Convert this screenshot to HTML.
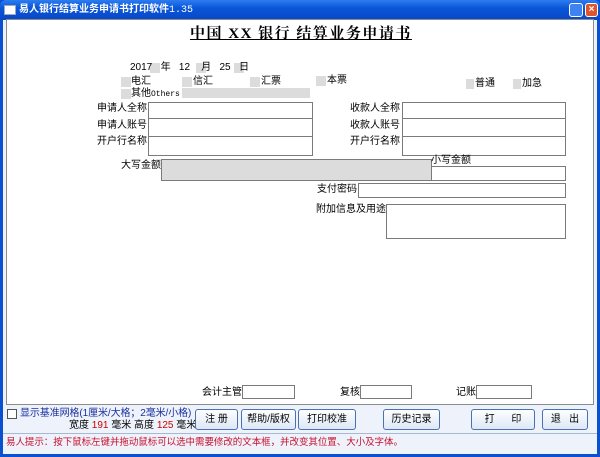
<!DOCTYPE html>
<html><head><meta charset="utf-8"><style>
*{margin:0;padding:0;box-sizing:border-box}
body{width:600px;height:457px;overflow:hidden;background:#0a50d0;font-family:"Liberation Sans","Noto Sans CJK SC","WenQuanYi Zen Hei",sans-serif;font-size:10px;color:#000;position:relative}
.a{position:absolute;white-space:nowrap;line-height:12px}
#tb{position:absolute;left:0;top:0;width:600px;height:20px;background:linear-gradient(#2e7cf0,#0a56d8 40%,#0848c8);border-radius:6px 6px 0 0}
#cl{position:absolute;left:3px;top:20px;width:594px;height:434px;background:#eef3fb}
#pn{position:absolute;left:6px;top:19px;width:588px;height:386px;background:#fff;border:1px solid #8c8c8c}
.g{position:absolute;background:#dcdcdc}
.bx{position:absolute;border:1px solid #7a7a7a;background:#fff}
.btn{position:absolute;top:409px;height:21px;border:1px solid #4a72b0;border-radius:3px;background:linear-gradient(#fdfeff,#dde8f6);text-align:center;line-height:19px;font-size:10px}
</style></head><body>
<div id="tb"></div>
<div class="a" style="left:4px;top:5px;width:12px;height:10px;background:#fff;border:1px solid #9ab"></div>
<div class="a" style="left:19px;top:4px;color:#fff;font-weight:bold;font-size:10px">易人银行结算业务申请书打印软件<span style="font-family:'Liberation Mono',monospace;font-weight:normal">1.35</span></div>
<div class="a" style="left:569px;top:3px;width:14px;height:14px;background:#3f82f0;border:1px solid #fff;border-radius:3px"></div>
<div class="a" style="left:585px;top:3px;width:13px;height:14px;background:#e0552c;border:1px solid #fff;border-radius:3px;color:#fff;font-size:10px;text-align:center;font-weight:bold">×</div>
<div id="cl"></div>
<div id="pn"></div>
<div class="a" style="left:190px;top:25px;font-size:15px;line-height:18px;font-weight:bold;text-decoration:underline;font-family:'Liberation Serif','Noto Serif CJK SC',serif;letter-spacing:1.5px">中国 XX 银行 结算业务申请书</div>
<div class="g" style="left:150px;top:63px;width:10px;height:10px"></div>
<div class="g" style="left:196px;top:63px;width:10px;height:10px"></div>
<div class="g" style="left:234px;top:63px;width:10px;height:10px"></div>
<div class="a" style="left:130px;top:62px;font-size:10px">2017 &nbsp;&nbsp;年 &nbsp;&nbsp;12 &nbsp;&nbsp;&nbsp;月 &nbsp;&nbsp;25 &nbsp;&nbsp;日</div>
<div class="g" style="left:121px;top:77px;width:10px;height:10px"></div><div class="a" style="left:131px;top:76px">电汇</div>
<div class="g" style="left:182px;top:77px;width:10px;height:10px"></div><div class="a" style="left:193px;top:76px">信汇</div>
<div class="g" style="left:250px;top:77px;width:10px;height:10px"></div><div class="a" style="left:261px;top:76px">汇票</div>
<div class="g" style="left:300px;top:88px;width:10px;height:10px"></div>
<div class="g" style="left:316px;top:76px;width:10px;height:10px"></div><div class="a" style="left:327px;top:75px">本票</div>
<div class="g" style="left:466px;top:79px;width:8px;height:10px"></div><div class="a" style="left:475px;top:78px">普通</div>
<div class="g" style="left:513px;top:79px;width:8px;height:10px"></div><div class="a" style="left:522px;top:78px">加急</div>
<div class="g" style="left:121px;top:89px;width:10px;height:10px"></div><div class="a" style="left:131px;top:88px">其他<span style="font-family:'Liberation Mono',monospace;font-size:8px">Others</span></div>
<div class="g" style="left:182px;top:88px;width:128px;height:10px"></div>
<div class="a" style="left:97px;top:103px">申请人全称</div><div class="a" style="left:97px;top:120px">申请人账号</div><div class="a" style="left:97px;top:136px">开户行名称</div>
<div class="bx" style="left:148px;top:102px;width:165px;height:17px"></div>
<div class="bx" style="left:148px;top:118px;width:165px;height:19px"></div>
<div class="bx" style="left:148px;top:136px;width:165px;height:20px"></div>
<div class="a" style="left:350px;top:103px">收款人全称</div><div class="a" style="left:350px;top:120px">收款人账号</div><div class="a" style="left:350px;top:136px">开户行名称</div>
<div class="bx" style="left:402px;top:102px;width:164px;height:17px"></div>
<div class="bx" style="left:402px;top:118px;width:164px;height:19px"></div>
<div class="bx" style="left:402px;top:136px;width:164px;height:20px"></div>
<div class="a" style="left:121px;top:160px">大写金额</div>
<div class="bx" style="left:161px;top:159px;width:271px;height:22px;background:#dcdcdc"></div>
<div class="a" style="left:431px;top:155px">小写金额</div>
<div class="bx" style="left:431px;top:166px;width:135px;height:15px"></div>
<div class="a" style="left:317px;top:184px">支付密码</div>
<div class="bx" style="left:358px;top:183px;width:208px;height:15px"></div>
<div class="a" style="left:316px;top:204px">附加信息及用途</div>
<div class="bx" style="left:386px;top:204px;width:180px;height:35px"></div>
<div class="a" style="left:202px;top:387px">会计主管</div><div class="bx" style="left:242px;top:385px;width:53px;height:14px"></div>
<div class="a" style="left:340px;top:387px">复核</div><div class="bx" style="left:360px;top:385px;width:52px;height:14px"></div>
<div class="a" style="left:456px;top:387px">记账</div><div class="bx" style="left:476px;top:385px;width:56px;height:14px"></div>
<div class="a" style="left:7px;top:409px;width:10px;height:10px;border:1px solid #555;background:#fff"></div>
<div class="a" style="left:20px;top:408px;color:#1a2fa0;font-size:10px;letter-spacing:-0.1px">显示基准网格(1厘米/大格；2毫米/小格)</div>
<div class="a" style="left:69px;top:420px;font-size:10px">宽度 <span style="color:#c00">191</span> 毫米 高度 <span style="color:#c00">125</span> 毫米</div>
<div class="btn" style="left:195px;width:43px">注 册</div>
<div class="btn" style="left:241px;width:55px">帮助/版权</div>
<div class="btn" style="left:298px;width:58px">打印校准</div>
<div class="btn" style="left:383px;width:57px">历史记录</div>
<div class="btn" style="left:471px;width:64px">打 &nbsp;&nbsp;&nbsp;&nbsp;&nbsp;印</div>
<div class="btn" style="left:542px;width:46px">退 &nbsp;&nbsp;出</div>
<div class="a" style="left:3px;top:433px;width:594px;height:1px;background:#a8b8d0"></div>
<div class="a" style="left:6px;top:437px;color:#c8102e;font-size:9.5px;letter-spacing:-0.05px">易人提示：按下鼠标左键并拖动鼠标可以选中需要修改的文本框，并改变其位置、大小及字体。</div>
</body></html>
